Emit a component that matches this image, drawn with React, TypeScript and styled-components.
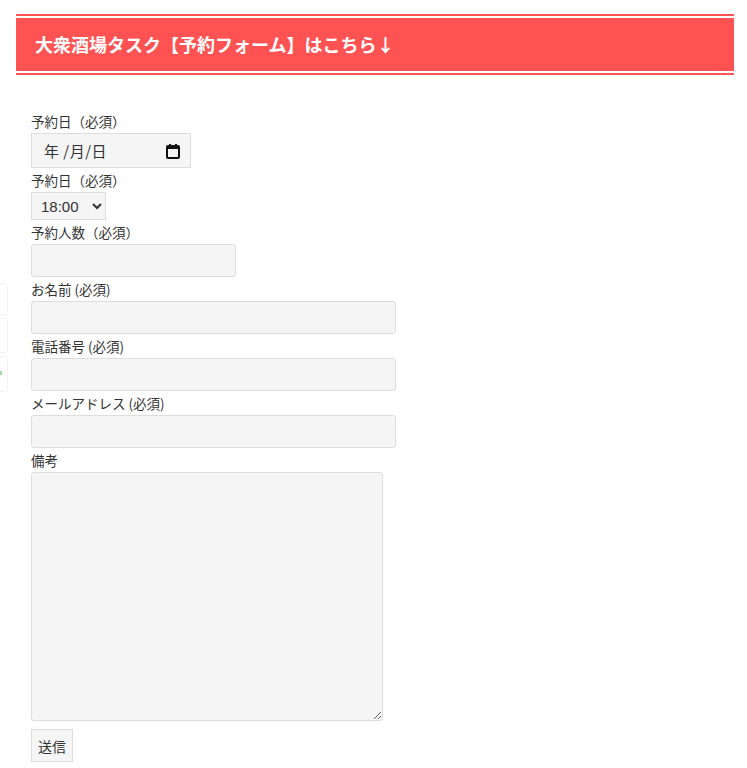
import React from "react";
import styled, { createGlobalStyle } from "styled-components";

const GlobalStyle = createGlobalStyle`
  html, body { margin: 0; padding: 0; background: #fff; }
  body {
    font-family: "Noto Sans CJK JP", "Noto Sans", "Liberation Sans", sans-serif;
    color: #333;
  }
`;

const Page = styled.div`
  padding: 14px 13px 0 16px;
`;

const HeadingFrame = styled.div`
  border-top: 2px solid #ff5252;
  border-bottom: 2px solid #ff5252;
  padding: 2px 0;
`;

const Heading = styled.h2`
  margin: 0;
  background: #ff5252;
  color: #fff;
  font-size: 18px;
  font-weight: 700;
  line-height: 24px;
  padding: 14px 20px 15px 19px;
  letter-spacing: 0;
`;

const Form = styled.form`
  display: flex;
  flex-direction: column;
  align-items: flex-start;
  padding: 34px 0 0 15px;
`;

const Label = styled.label`
  display: block;
  font-size: 13.5px;
  line-height: 24px;
  height: 24px;
  color: #333;
`;

const fieldBase = `
  box-sizing: border-box;
  background: #f5f5f5;
  border: 1px solid #ddd;
  border-radius: 3px;
  font-family: inherit;
  color: #333;
  margin: 0;
  outline: none;
`;

const DateField = styled.div`
  ${fieldBase}
  border-radius: 0;
  width: 160px;
  height: 35px;
  display: flex;
  align-items: center;
  justify-content: space-between;
  padding: 0 10px 0 12px;
  font-size: 15px;
`;

const DateText = styled.span`
  letter-spacing: 0.5px;
`;

const Select = styled.select`
  ${fieldBase}
  border-radius: 0;
  width: 75px;
  height: 28px;
  font-size: 15px;
  font-family: "Liberation Sans", "Noto Sans", sans-serif;
  padding: 0 2px 0 5px;
`;

const TextInput = styled.input<{ $w: number }>`
  ${fieldBase}
  width: ${(p) => p.$w}px;
  height: 33px;
  padding: 0 8px;
  font-size: 14px;
`;

const TextArea = styled.textarea`
  ${fieldBase}
  width: 352px;
  height: 249px;
  padding: 6px 8px;
  font-size: 14px;
  display: block;
`;

const SubmitButton = styled.button`
  box-sizing: border-box;
  margin-top: 8px;
  width: 42px;
  height: 33px;
  background: #f5f5f5;
  border: 1px solid #ddd;
  border-radius: 0;
  font-family: inherit;
  font-size: 14px;
  color: #333;
  padding: 0;
`;

const ShareRail = styled.div`
  position: fixed;
  left: -40px;
  top: 283px;
  display: flex;
  flex-direction: column;
  gap: 3px;
`;

const ShareBox = styled.div<{ $h: number }>`
  width: 46px;
  height: ${(p) => p.$h}px;
  border: 1px solid #f3f3f3;
  border-radius: 3px;
  background: #fff;
  position: relative;
`;

const ShareDot = styled.span`
  position: absolute;
  right: 5px;
  top: 14px;
  width: 2px;
  height: 4px;
  background: #9fdfa8;
`;

function CalendarIcon() {
  return (
    <svg width="14" height="16" viewBox="0 0 14 16" aria-hidden="true">
      <rect x="1" y="3" width="12" height="12" rx="1" fill="none" stroke="#111" strokeWidth="2" />
      <rect x="1" y="3" width="12" height="3" fill="#111" />
      <rect x="3" y="1" width="2" height="3" fill="#111" />
      <rect x="9" y="1" width="2" height="3" fill="#111" />
    </svg>
  );
}

export default function App() {
  return (
    <>
      <GlobalStyle />
      <ShareRail>
        <ShareBox $h={30} />
        <ShareBox $h={33} />
        <ShareBox $h={34}>
          <ShareDot />
        </ShareBox>
      </ShareRail>
      <Page>
        <HeadingFrame>
          <Heading>大衆酒場タスク【予約フォーム】はこちら↓</Heading>
        </HeadingFrame>
        <Form onSubmit={(e) => e.preventDefault()}>
          <Label>予約日（必須）</Label>
          <DateField>
            <DateText>年 /月/日</DateText>
            <CalendarIcon />
          </DateField>
          <Label>予約日（必須）</Label>
          <Select defaultValue="18:00">
            <option>17:00</option>
            <option>18:00</option>
            <option>19:00</option>
            <option>20:00</option>
          </Select>
          <Label>予約人数（必須）</Label>
          <TextInput type="text" $w={205} />
          <Label>お名前 (必須)</Label>
          <TextInput type="text" $w={365} />
          <Label>電話番号 (必須)</Label>
          <TextInput type="text" $w={365} />
          <Label>メールアドレス (必須)</Label>
          <TextInput type="text" $w={365} />
          <Label>備考</Label>
          <TextArea />
          <SubmitButton type="submit">送信</SubmitButton>
        </Form>
      </Page>
    </>
  );
}
